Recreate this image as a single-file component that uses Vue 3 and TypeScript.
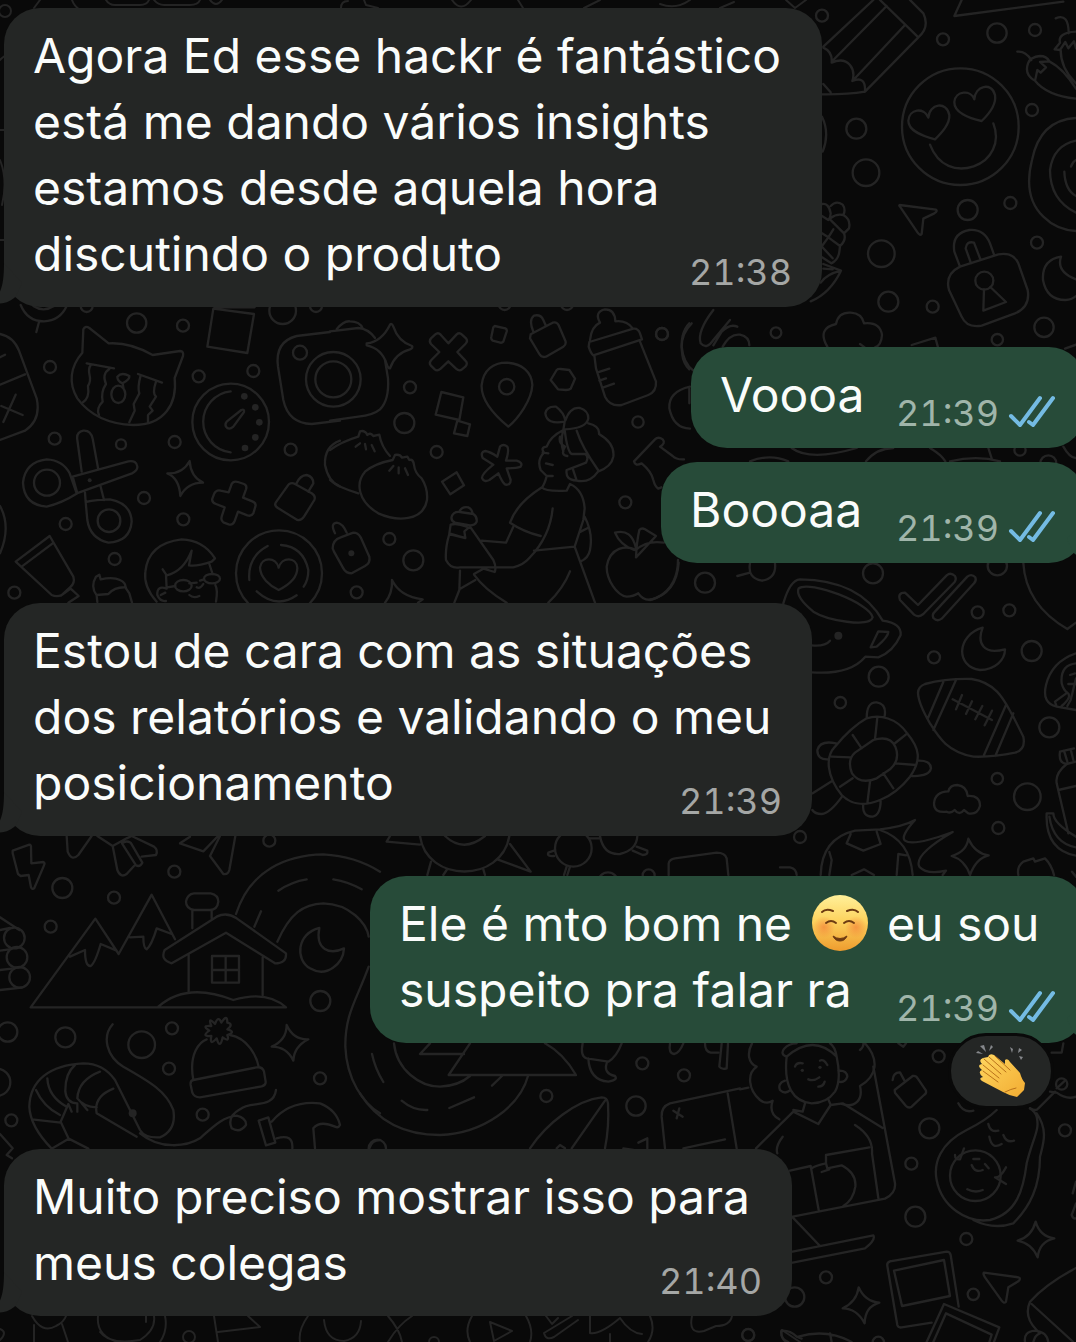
<script setup lang="ts">
interface Message {
  id: number
  side: 'in' | 'out'
  width: string
  lines: string[]
  time: string
  tail: boolean
  gap: 'first' | 'near' | 'far' | 'reacted'
  reaction?: boolean
}

const messages: Message[] = [
  {
    id: 1, side: 'in', width: 'w-xl', tail: true, gap: 'first', time: '21:38',
    lines: ['Agora Ed esse hackr é fantástico', 'está me dando vários insights', 'estamos desde aquela hora', 'discutindo o produto'],
  },
  { id: 2, side: 'out', width: 'w-xs', tail: false, gap: 'far', time: '21:39', lines: ['Voooa'] },
  { id: 3, side: 'out', width: 'w-sm', tail: true, gap: 'near', time: '21:39', lines: ['Boooaa'] },
  {
    id: 4, side: 'in', width: 'w-lg', tail: true, gap: 'far', time: '21:39',
    lines: ['Estou de cara com as situações', 'dos relatórios e validando o meu', 'posicionamento'],
  },
  {
    id: 5, side: 'out', width: 'w-md', tail: true, gap: 'far', time: '21:39', reaction: true,
    lines: ['Ele é mto bom ne ☺ eu sou', 'suspeito pra falar ra'],
  },
  {
    id: 6, side: 'in', width: 'w-ml', tail: true, gap: 'reacted', time: '21:40',
    lines: ['Muito preciso mostrar isso para', 'meus colegas'],
  },
]

type Ring = [number, number, number]

/* Each wallpaper tile is drawn in thirds of a pixel. */
const ringsNE: Ring[] = [
  [126, 47, 18], [489, 118, 18], [651, 99, 29], [765, 90, 18], [229, 386, 30], [258, 518, 40], [756, 330, 18],
  [563, 630, 30], [691, 609, 18], [771, 728, 18], [304, 761, 40], [325, 905, 30], [458, 920, 18], [792, 982, 29], [652, 1019, 17],
]
const ringsW: Ring[] = [
  [410, 69, 29], [549, 77, 18], [150, 201, 18], [596, 229, 18], [760, 213, 18], [900, 158, 21], [164, 416, 18],
  [363, 433, 15], [524, 426, 18], [872, 449, 18], [432, 594, 18], [197, 672, 18], [550, 658, 18], [344, 777, 18],
  [43, 878, 18], [848, 32, 40], [260, 18, 18], [948, 18, 18], [141, 548, 39], [327, 662, 34],
]
const ringsC: Ring[] = [
  [240, 262, 18], [223, 369, 30], [320, 456, 18], [178, 717, 18], [250, 781, 30], [80, 877, 18], [996, 102, 18],
  [924, 366, 17], [886, 607, 18], [530, 260, 23], [524, 12, 18], [711, 12, 18],
]
const ringsE: Ring[] = [
  [279, 40, 30], [652, 17, 29], [593, 157, 18], [688, 151, 18], [755, 273, 30], [462, 292, 18], [296, 350, 30],
  [181, 428, 17], [808, 502, 30], [652, 656, 17], [742, 710, 40], [655, 804, 18], [60, 831, 18],
]
const ringsSW: Ring[] = [
  [187, 204, 30], [342, 233, 18], [523, 155, 18], [152, 320, 18], [808, 62, 18], [961, 543, 30], [196, 652, 30],
  [23, 636, 29], [425, 674, 40], [516, 625, 18], [507, 746, 18], [960, 775, 18], [608, 884, 18], [34, 901, 18],
  [-10, 787, 41], [43, 354, 31], [51, 412, 31], [59, 472, 31],
]
const ringsS: Ring[] = [
  [559, 828, 18], [847, 730, 18], [972, 766, 18], [828, 858, 29], [52, 985, 26], [866, 166, 18], [744, 186, 29],
]
const ringsSE: Ring[] = [
  [596, 49, 18], [568, 265, 30], [514, 371, 18], [526, 530, 30], [679, 597, 18], [975, 271, 18], [258, 712, 18],
  [700, 763, 17], [164, 771, 29], [25, 885, 18], [415, 907, 17], [965, 132, 17],
]
</script>

<template>
  <main class="chat">
    <svg class="wallpaper" viewBox="0 0 1076 1342" preserveAspectRatio="xMidYMid slice" aria-hidden="true">
      <!-- sliver above the first message -->
      <g class="fine">
        <circle cx="5" cy="11" r="6" />
        <path d="M34 8L40 0M72 0Q74 6 80 10M106 0Q109 5 115 5H140Q147 5 149 0M154 0Q158 5 164 5H190Q198 5 200 0M210 0Q216 8 222 0M341 8Q341 1 348 1M364 0L366 5L378 8M452 0Q461 13 471 0M518 0L523 8M584 8L600 0M660 4Q676 10 690 0M720 8L734 2M786 0L795 8L806 0" />
        <path d="M0 60Q4 56 5 56M0 130H5M0 160Q8 180 2 205M0 240H5" />
      </g>

      <!-- pencil, heart eyes, padlock, berries -->
      <g class="sketch" transform="translate(780 0) scale(.33333)">
        <circle v-for="(r, i) in ringsNE" :key="i" :cx="r[0]" :cy="r[1]" :r="r[2]" />
        <path d="M130 140L280 0M160 180L320 18M220 240L375 75M255 275L415 112M300 0L415 112Q450 82 430 40L390 0M130 143Q158 155 155 188Q190 172 210 195Q226 215 217 243Q258 226 255 275Q200 284 125 283M130 252L152 277" />
        <path d="M545 0L523 48L850 5" />
        <circle cx="541" cy="380" r="175" />
        <path d="M465 418C425 407 385 392 385 362C387 327 432 320 445 353C448 310 500 302 508 345C510 372 485 398 465 418ZM605 363C565 355 522 337 523 306C526 272 573 268 583 298C584 258 635 244 645 285C650 315 627 342 605 363ZM450 434C475 500 530 516 581 499C635 481 662 426 640 370" />
        <path d="M712 155Q736 152 754 180M888 296Q800 286 765 242Q732 225 744 190Q752 170 780 168Q800 168 808 184L780 186L798 202L782 218L772 210Q768 230 765 242M808 184Q850 205 888 266M827 55Q866 38 866 100M888 95Q832 98 840 128L824 148L840 150L856 126L865 145L882 124L888 145M842 150Q842 205 888 250" />
        <path d="M888 354Q780 360 756 480Q728 590 790 650Q830 690 888 693M888 422Q820 436 810 510Q810 600 888 638M853 515Q855 570 888 588M873 500Q878 485 888 480M126 350Q150 400 128 455" />
        <path d="M359 615L468 629Q474 633 463 640L430 656L425 702Q420 708 413 698L360 620Q356 616 359 615Z" />
        <path d="M540 800L523 755Q514 700 568 690Q612 686 630 730L642 764M573 790L557 745Q560 722 582 728L602 780M540 800L655 763Q700 755 715 790L743 870Q752 920 705 940L605 977Q560 985 545 950L507 870Q494 823 540 800ZM612 868L610 932L678 906L631 861" />
        <circle cx="613" cy="842" r="27" />
        <path d="M843 770Q785 780 789 840Q800 900 856 900Q878 898 888 888M843 770Q828 815 888 838" />
        <path d="M126 612Q146 608 152 640Q152 652 145 660L126 648M152 618Q168 600 188 614Q198 628 190 645Q213 658 207 685L192 700Q200 720 180 738L178 755Q175 780 154 790L126 772M152 654Q170 640 190 645M150 658L192 700M126 700L145 712L180 738M145 712L160 688M126 738L145 712M126 740L158 775M130 792L183 812Q150 880 92 904M183 812Q140 822 122 848M130 806L158 808" />
        <path d="M142 1040Q110 985 168 972Q175 936 212 938Q246 940 252 970Q300 965 306 1005Q304 1036 285 1042M240 1032L254 1042M395 1035L466 1013L474 1042M855 1046L888 1034" />
      </g>

      <!-- cat, gauge, scissors, camera -->
      <g class="sketch" transform="translate(0 300) scale(.33333)">
        <circle v-for="(r, i) in ringsW" :key="i" :cx="r[0]" :cy="r[1]" :r="r[2]" />
        <path d="M62 15Q82 64 132 64Q180 62 200 18M100 18Q130 38 162 18M117 66L109 96" />
        <path d="M247 158L250 88Q256 76 268 84L326 130Q390 126 458 165L540 153Q552 154 549 168L524 234C532 310 495 375 400 375C320 372 265 340 232 295C205 250 210 200 247 158Z" />
        <path d="M260 190L342 205M272 195C256 220 282 230 264 258C268 285 262 300 247 308M328 207Q305 222 318 252Q302 276 308 305Q288 325 297 345M414 222L486 248M422 226Q412 262 418 280L401 312L404 332L388 367M468 245Q456 280 468 290L449 320L458 332L444 345V367M352 230Q365 215 388 228Q390 238 368 250Q352 244 352 230ZM368 250L370 262" />
        <ellipse cx="355" cy="283" rx="21" ry="26" />
        <path d="M622 140L640 26L762 42L742 159ZM644 22L764 22" />
        <circle cx="692" cy="366" r="115" />
        <path d="M692 274A92 92 0 0 0 692 457M680 365L724 330Q734 326 732 336L700 380Q686 392 678 380Q674 372 680 365Z" />
        <g class="dots">
          <circle cx="733" cy="289" r="10" /><circle cx="766" cy="322" r="10" /><circle cx="778" cy="367" r="10" />
          <circle cx="766" cy="412" r="10" /><circle cx="735" cy="444" r="10" /><circle cx="269" cy="541" r="6" />
        </g>
        <path d="M0 102Q40 110 57 152L110 295Q124 360 75 392L0 420M0 254L75 223M0 172L15 164M47 284L10 366M4 318L68 345M0 618Q34 680 0 760" />
        <path d="M245 515L232 420Q228 396 250 392Q272 390 278 416L294 504M218 530L385 484Q410 480 412 500Q413 512 396 520L230 580M230 580L209 520Q188 480 140 478Q75 486 69 548Q72 615 140 620Q185 610 232 580L218 530M255 578L257 606Q290 598 330 598Q393 610 395 665Q390 725 325 728Q270 715 262 660L257 606M302 560L312 600" />
        <path d="M502 520Q548 522 569 483Q572 530 609 548Q562 548 541 588Q538 535 502 520Z" />
        <path d="M686 577L695 552Q700 542 714 546L732 552Q742 556 738 568L729 593L757 604Q770 609 766 620L760 640Q754 650 742 646L714 635L704 663Q698 677 686 673L670 667Q662 662 665 650L674 622L648 612Q634 607 637 596L643 580Q650 568 662 572Z" />
        <path d="M866 553Q876 546 885 552L935 580Q948 588 943 600L912 650Q903 663 892 660L835 625Q822 618 827 608ZM888 553Q900 525 920 525Q940 530 940 550L925 575" />
        <path d="M990 96L890 108Q824 125 834 200L850 300Q865 370 935 372L1020 362M1020 422Q972 440 975 495Q985 545 1020 560" />
        <circle cx="1000" cy="238" r="82" /><circle cx="1000" cy="238" r="54" />
        <path d="M47 785L149 708L220 830Q226 850 210 862L185 885Q170 892 155 885ZM65 800L158 730M183 887L212 866L236 888L205 908" />
        <path d="M292 906L290 886Q270 860 288 830L298 824L302 838Q340 830 360 840Q378 848 376 862L388 880L396 908M290 885L325 882Q345 860 378 862" />
        <path d="M470 905Q430 860 436 815Q445 730 545 718Q610 720 645 775L635 785Q590 800 567 796L575 752Q550 815 500 826L488 808M498 826L500 866Q470 855 472 885Q480 905 498 903M482 885L496 878M628 792L638 822M646 855Q654 870 648 905M502 862L526 858M568 850L590 848M600 842L612 838M590 862Q600 868 610 852M568 885Q580 896 598 888" />
        <ellipse cx="550" cy="857" rx="25" ry="17" /><ellipse cx="636" cy="836" rx="24" ry="14" />
        <circle cx="837" cy="820" r="129" />
        <path d="M803 738Q742 770 748 840M843 735Q910 740 925 810Q925 840 911 860M770 874Q830 928 890 886M836 870C810 858 780 832 780 802C785 770 828 770 836 803C845 770 890 770 892 804C892 835 860 858 836 870Z" />
      </g>

      <!-- buns, pin, bottle, reader with a drink -->
      <g class="sketch" transform="translate(330 300) scale(.33333)">
        <circle v-for="(r, i) in ringsC" :key="i" :cx="r[0]" :cy="r[1]" :r="r[2]" />
        <path d="M0 94L85 84Q115 86 135 114M20 88Q40 62 60 64Q90 64 98 85M165 180L174 235Q178 300 150 328Q130 345 85 350L0 362" />
        <path d="M110 130Q155 125 180 74Q186 68 190 80Q205 125 246 138Q250 144 240 148Q195 160 180 205Q175 207 170 192Q155 145 110 136Z" />
        <path d="M355 130L380 103Q388 96 396 104L408 115Q415 124 406 132L382 156L406 182Q415 190 406 200L396 208Q388 215 378 206L355 184L332 206Q322 215 314 208L302 196Q296 188 304 180L328 156L303 132Q296 124 303 115L315 104Q324 96 332 104Z" />
        <path d="M494 78L526 85Q532 88 530 95L520 125Q515 130 508 127L488 122Q482 118 484 110L490 82ZM610 95Q595 60 612 47Q632 42 640 60L648 78M602 103L668 68Q680 64 686 76L706 122Q710 134 700 140L648 170Q635 174 628 162L600 115ZM662 240L680 210Q684 206 692 207L718 210L735 236L722 266Q718 270 708 270L684 268ZM334 276L400 292L388 360L317 344ZM382 362L420 373L412 408L372 400ZM336 545L380 517L402 556L361 583Z" />
        <path d="M535 380C505 355 452 305 455 255C460 210 490 188 530 188C575 190 605 215 607 255C605 300 565 355 535 380Z" />
        <path d="M810 68Q792 35 825 28Q855 28 856 64Q890 60 908 85M780 120Q784 80 810 68M778 126L910 86Q924 84 930 100L936 118L790 166Q782 160 776 140ZM793 166L798 205L825 290Q840 320 875 315L955 285Q980 275 978 245L930 125M803 217L838 206M808 242L828 235M820 262L852 251" />
        <path d="M85 580Q20 560 0 540M0 450Q35 425 85 410L90 394Q105 390 112 405Q120 396 130 408L148 404Q154 440 180 468M90 430L77 440M105 432L108 448M125 435L134 454" />
        <path d="M195 465Q210 462 216 473L232 470L238 480Q250 476 252 495Q255 520 275 535Q294 565 291 600C280 665 200 665 145 640C85 605 75 550 105 515Q135 490 188 480ZM190 498L178 512M206 502V520M225 505L234 525" />
        <path d="M502 470L510 440Q520 430 532 440Q538 450 528 482L560 482Q580 488 572 500Q560 505 530 505L542 540Q542 556 526 554Q518 550 505 520L478 540Q462 548 456 534Q455 522 490 494L458 474Q450 456 466 453Q480 455 502 470Z" />
        <path d="M15 700Q0 670 20 668Q38 670 50 698M8 745Q8 720 32 712L70 698Q84 698 92 712L118 770Q122 788 105 798L65 820Q48 820 40 805L12 755Z" />
        <circle cx="64" cy="760" r="9" class="solid" />
        <path d="M165 908Q188 880 186 840Q210 890 278 898L264 908M373 908L388 870L390 812M388 868L436 840" />
        <path d="M388 636Q395 618 415 622Q425 626 428 640M365 650Q370 634 390 636L430 642Q442 650 440 665Q435 676 420 676L375 668Q362 662 365 650ZM362 674L358 700L406 714L403 694L420 680L490 780Q500 802 494 816L460 806M406 714L358 702Q345 745 348 780Q362 808 390 802H550Q580 795 598 774Q660 710 668 625M432 822L460 806M432 824Q465 870 530 908M455 722L528 728L550 680M362 674Q380 668 410 680" />
        <path d="M704 365Q650 375 646 340Q650 318 678 320Q702 338 706 362Q720 320 750 324Q775 332 775 355Q770 385 704 388M704 365L700 390Q690 425 700 455M700 390Q660 410 650 440Q630 442 642 458Q620 480 632 510L650 528L668 528M650 528Q645 550 636 562Q560 610 540 668Q580 695 632 708M704 390Q712 455 725 462H765M740 392Q755 440 804 510M775 370Q810 378 807 402Q855 430 850 470Q845 500 804 515Q780 550 740 542Q705 540 710 510Q725 505 768 488Q778 470 765 462M728 505L740 542M636 562Q645 575 710 572L720 552Q760 570 764 625L760 660L734 740L612 752M764 650Q790 700 780 750Q775 775 752 784M752 695L772 685M734 740L795 908M720 814Q700 865 655 908M648 490L668 495M638 458L655 460M690 410Q685 430 705 440M705 440Q690 465 712 468" />
        <path d="M912 484L975 418Q985 408 998 418Q1008 430 990 440L1028 468Q1040 480 1062 478M912 484Q915 500 935 490Q965 515 970 540Q975 560 985 566L994 562" />
        <path d="M918 750C890 735 840 740 830 800C830 840 860 885 890 890Q910 890 925 880Q945 910 980 893C1030 870 1044 820 1044 780M918 750Q950 720 1002 728M918 772Q920 725 928 690Q935 682 945 688L978 708L918 772M912 750Q870 735 855 698Q905 685 918 745" />
        <path d="M1078 70Q1048 100 1057 165Q1060 190 1078 208M1080 260Q1015 275 1018 325Q1030 385 1080 386M1078 266V310" />
      </g>

      <!-- slivers between the replies -->
      <g class="sketch" transform="translate(650 330) scale(.33333)">
        <path d="M125 -20Q95 10 95 50Q100 100 130 122M190 -60Q140 5 152 40Q170 60 190 30L240 -30M190 46L215 5Q240 -20 262 -10M218 50Q240 10 270 14Q298 20 298 46" />
        <path d="M425 354Q480 395 620 354M648 394Q680 355 730 354M840 354Q875 375 886 394M1015 354L1025 385M1240 350Q1260 385 1278 384M300 394Q360 370 415 394M900 394Q980 375 1050 394" />
        <circle cx="378" cy="8" r="16" /><circle cx="1110" cy="360" r="17" /><circle cx="1195" cy="400" r="24" />
        <circle cx="165" cy="758" r="30" /><circle cx="36" cy="12" r="18" />
        <path d="M300 700Q292 745 336 752Q380 745 375 700M262 738L300 728M0 810Q80 790 86 698" />
      </g>

      <!-- cup, ticks, football, turtle -->
      <g class="sketch" transform="translate(780 560) scale(.33333)">
        <circle v-for="(r, i) in ringsE" :key="i" :cx="r[0]" :cy="r[1]" :r="r[2]" />
        <path d="M10 130Q30 60 60 58Q240 60 308 182Q365 190 362 225Q340 275 295 292L256 290Q210 345 95 337M56 85C90 60 270 130 278 172C270 205 140 180 100 155Q45 110 56 85ZM295 214L325 216Q325 230 290 260L272 262ZM95 256Q135 260 150 242" />
        <circle cx="175" cy="227" r="12" class="solid" />
        <path d="M360 120Q352 98 375 98L414 135L500 46Q512 36 525 48Q530 56 524 66L430 162Q416 174 402 164ZM462 158L562 50Q575 40 586 52Q590 62 582 70L485 176Q472 186 460 174Q456 164 462 158Z" />
        <path d="M730 9C735 100 790 165 862 207L888 188M608 203C530 225 525 320 600 330C645 330 675 300 675 268C610 285 590 250 608 203Z" />
        <path d="M414 398Q415 380 435 372Q500 355 575 357C660 370 680 440 700 470L730 530Q738 570 705 578Q640 592 580 590C500 575 475 530 450 490Q415 430 414 398ZM490 366L444 474M528 360L460 510M678 435L612 585M700 460L646 588M518 418L636 480M546 405L528 448M576 424L558 462M607 438L586 478M636 452L614 496" />
        <path d="M260 475Q260 425 290 427Q320 432 314 468M260 475C300 462 350 475 380 518C420 565 425 600 390 650Q350 700 300 720C250 740 215 735 185 705C140 650 135 590 165 560Q215 500 260 475ZM280 540Q330 525 346 560Q362 600 330 628L290 655Q240 675 216 640Q200 600 225 578ZM292 472L285 538M382 520L342 552M218 525L245 565M155 590L212 592M180 680L218 655M270 665L262 730M310 640L340 685M346 610L408 615M168 550Q120 540 112 570Q112 600 145 598M412 602Q452 600 453 625Q448 650 395 648M250 732Q245 770 278 770Q302 765 302 720M155 664L98 700M186 710Q150 760 125 762Q105 762 97 750" />
        <path d="M500 755Q462 760 462 730Q465 695 505 694Q510 675 532 675Q560 678 563 708Q600 705 600 738Q592 765 565 760L552 750Q538 768 524 750Q512 762 500 755Z" />
        <path d="M888 280Q815 305 798 375Q785 430 830 440L888 450M888 310Q840 315 845 370Q850 390 862 398M862 398L825 425L830 440M862 398Q878 410 845 438M888 355L872 420L862 438M865 372H888M870 345L885 340" />
        <path d="M840 575L882 565M840 575Q835 610 860 612L888 605M852 572L862 605M872 568L880 600M860 612Q825 640 830 670L865 820M835 690L888 678M800 760H820Q820 790 888 830M800 760Q795 870 888 887M808 770Q820 850 888 862" />
        <path d="M122 945Q125 835 225 812L300 808Q370 800 405 780Q360 830 375 842Q400 860 518 816Q400 885 418 920Q440 945 498 932L488 945M300 810Q390 840 398 945M212 822L200 850L250 872L302 852L290 815M148 876L155 900L148 945M350 945L355 882L378 886M215 945L252 928L282 945M565 836Q585 880 626 886Q588 895 570 945Q555 900 515 888Q560 875 565 836ZM715 945Q710 920 730 905L760 895L765 905L795 895Q815 915 822 945M0 922H30Q48 925 50 945M876 935L888 950" />
      </g>

      <!-- mountains, cabin, winding road, shrimp -->
      <g class="sketch" transform="translate(0 820) scale(.33333)">
        <circle v-for="(r, i) in ringsSW" :key="i" :cx="r[0]" :cy="r[1]" :r="r[2]" />
        <path d="M38 92L88 74Q94 74 93 84L94 130L130 126Q136 128 132 136L103 204Q98 210 93 202L86 165L62 168L54 162L38 100ZM200 48L203 95Q215 125 235 105L275 48M292 48L338 78L380 55L395 48L462 80Q475 90 468 105L425 110M338 78L352 150Q362 175 380 162L402 138M366 70L408 136Q420 142 427 128L392 68Q378 60 366 70M540 70L610 94L654 48M540 70L570 50M630 108L670 162Q684 165 688 150L706 48M630 108L660 48" />
        <path d="M92 562L286 296L356 402L455 224L525 358M92 562H858M210 410L255 390Q255 440 272 438Q285 430 302 372L350 392M390 352L430 350Q430 385 440 388Q455 375 470 325L515 342M475 560Q560 485 700 540Q800 510 858 562" />
        <path d="M494 390Q480 420 515 430L678 338L825 430Q860 430 858 400L710 295Q680 275 650 290ZM566 405V515M788 412V525M577 270V325M635 270V295M582 220H632Q655 225 655 245Q652 270 630 270H582Q558 265 558 245Q562 222 582 220ZM636 408H717V488H636ZM677 408V488M636 450H717M783 274L763 320" />
        <path d="M708 282C750 150 860 105 970 103Q1065 108 1140 155M835 212Q875 185 920 178M1000 178Q1045 185 1085 208M832 365C870 280 910 252 970 250C1050 252 1100 310 1106 350M1106 440C1070 540 1035 580 1036 680C1040 780 1090 850 1140 880" />
        <path d="M958 324C890 340 885 420 930 445C980 475 1030 430 1032 385C990 405 945 390 958 324Z" />
        <path d="M0 292L58 330M0 330L30 324M0 392L28 388M0 450L35 446M0 510L65 503" />
        <path d="M580 780C565 700 600 665 620 658M690 645C745 655 770 710 776 740M580 780L770 742Q788 740 792 755L797 785Q798 795 785 799L600 832Q582 832 577 818L572 795Q570 782 580 780Z" />
        <path d="M645 612Q655 585 664 608Q682 580 682 608Q702 612 682 628Q710 636 682 645Q690 668 668 652Q660 690 650 655Q628 680 634 648Q602 650 628 632Q602 615 634 618Q622 588 645 612Z" />
        <path d="M860 615Q880 660 925 658Q882 680 880 722Q860 680 815 680Q860 660 860 615Z" />
        <path d="M338 613C305 650 320 710 370 740C450 785 500 815 520 870Q530 930 480 952Q435 955 420 930L345 780Q310 730 250 730C150 735 90 780 88 860C90 910 120 950 155 986M410 950L290 880Q280 830 340 806M290 862Q250 860 232 835Q235 780 300 755M232 850Q200 850 196 815Q195 760 225 735M200 860Q145 830 142 775M180 885Q130 860 108 810M182 908L96 898M155 986L206 956L182 905L205 852L215 875M232 852V875M245 850L262 870M206 956L265 986M420 940C480 990 560 980 600 955C640 920 670 890 710 887Q740 895 738 915Q720 940 695 925Q680 890 720 868C750 840 820 870 828 810" />
        <circle cx="398" cy="880" r="12" class="solid" />
        <path d="M776 902L805 892L826 968L798 976ZM815 905Q870 840 960 850Q1010 870 1020 915Q1015 925 1005 920Q960 900 940 925L945 985M830 955Q880 940 877 985M1108 985Q1115 960 1140 960M0 942L38 985L20 1005L36 1015" />
      </g>

      <!-- road end, tents, leaf -->
      <g class="sketch" transform="translate(360 820) scale(.33333)">
        <circle v-for="(r, i) in ringsS" :key="i" :cx="r[0]" :cy="r[1]" :r="r[2]" />
        <path d="M90 48L80 65L180 74M180 48C200 190 425 190 448 48M255 48Q310 100 375 48M450 72L512 155L412 118M213 125L202 165M260 150L250 165M370 148L375 165" />
        <circle cx="640" cy="85" r="55" />
        <path d="M582 92L565 98Q560 110 582 108M688 55L720 55M720 48Q730 105 780 102Q830 90 832 48M830 80L862 92Q865 105 848 105L818 92M612 165L620 140M630 140L622 165M926 165V130Q928 118 945 115L1070 98Q1095 98 1100 115L1105 165" />
        <path d="M210 670L180 702H312M330 670L266 765H648Q610 700 555 670M102 670C110 750 180 800 240 800Q295 798 330 768M0 820C50 900 130 945 240 945C370 940 480 860 505 765M36 702Q45 745 70 786M125 842Q160 872 202 870M268 864L342 832M396 797L426 768" />
        <path d="M510 985C560 910 650 840 725 832Q742 832 744 850Q748 920 735 985M735 842L635 985M590 985L600 975L615 985M790 985L820 990M835 968L862 955V985" />
        <path d="M668 670Q660 710 680 715L745 725Q770 710 785 670M685 715Q688 780 745 785Q775 780 765 768Q730 760 740 730M930 670Q925 700 942 702Q958 700 970 670M1035 670Q1035 695 1052 698H1075M1085 670L1078 740Q1085 750 1100 745L1104 670" />
        <path d="M915 985L905 890Q903 860 930 850L1140 805M1103 820L1130 985M970 985L1095 958M940 872L968 890M958 865L950 895" />
      </g>

      <!-- student at a desk, avocado, photos -->
      <g class="sketch" transform="translate(740 1040) scale(.33333)">
        <circle v-for="(r, i) in ringsSE" :key="i" :cx="r[0]" :cy="r[1]" :r="r[2]" />
        <path d="M36 10C20 40 25 70 50 80C20 100 25 150 60 180Q80 195 98 182Q85 220 118 238M375 10C420 60 410 110 360 138C370 180 345 205 305 192M360 30Q372 20 370 10M0 148L25 143" />
        <path d="M140 50Q220 -20 290 50Q305 120 285 155Q260 190 215 190C160 185 130 140 140 50ZM140 50C110 40 140 10 170 10M290 50Q285 20 270 10M135 122Q112 130 120 150Q135 165 152 150M295 92Q320 90 322 110Q315 130 295 125M195 190L188 215L160 210M265 178L272 195L235 252L160 215L48 325M272 195L308 190L428 264M165 80Q170 66 188 70M240 62Q250 55 262 75M205 118Q220 125 238 112M235 140Q250 140 254 125M400 80L465 430Q468 460 435 476L158 530M128 290Q105 320 112 340M345 255Q400 290 396 340L415 474M150 392L212 378L236 510M215 385Q230 375 258 370V345L388 322M258 370L262 385L305 376Q350 400 346 440Q340 480 310 498M245 396L268 388M158 532L240 618M158 635L400 586Q408 600 375 625L158 668" />
        <circle cx="187" cy="91" r="5" class="solid" /><circle cx="240" cy="82" r="5" class="solid" />
        <path d="M458 120Q460 96 480 97L495 125M464 150L518 108Q528 106 533 115L558 152Q560 160 552 165L515 200Q506 206 498 198L465 158ZM475 10L490 20L498 10" />
        <path d="M770 210Q740 240 680 270C600 310 580 370 590 420C605 500 680 550 750 540C830 520 850 450 860 370C880 290 900 270 890 230Q885 215 870 205M890 220C925 270 910 310 900 350C900 440 870 500 820 550Q760 570 700 540" />
        <circle cx="706" cy="407" r="76" />
        <path d="M745 252Q750 278 775 272M748 290Q755 330 785 312M790 285Q800 310 822 302M645 345Q645 360 660 358L672 325M798 382Q780 415 765 412L798 432M695 375Q705 400 728 390M682 448Q705 460 728 450M700 357H718M735 372L746 385M655 190Q670 220 700 212M870 205Q890 215 895 205L925 175Q940 160 945 155M930 155L950 158Q980 180 1008 170M935 38H965L970 10M950 145L975 122M1008 425L998 460M995 525Q1000 538 1008 535M995 525L1008 490" />
        <path d="M887 545Q900 590 943 595Q898 605 893 652Q875 610 833 602Q875 590 887 545ZM356 742Q375 785 418 788Q375 800 374 850Q350 805 308 805Q350 785 356 742Z" />
        <path d="M450 664L620 635Q630 635 632 645L656 800M450 664Q440 668 442 678L472 855Q475 864 485 862L575 848M462 692L612 660L630 768L486 798ZM560 906L612 792L778 862L762 906M580 906L618 820L755 884L748 906" />
        <path d="M732 698L835 712Q845 714 835 724L805 742L798 785Q792 792 785 782L735 712Q728 700 732 698ZM1008 684Q920 730 870 785Q850 830 890 870L900 880M875 792L1000 906M855 906Q850 875 885 872Q920 875 925 906M880 906Q885 885 900 880" />
        <path d="M124 872Q120 895 145 906M124 872Q150 870 170 890L185 896M175 890Q260 865 335 906M270 880L275 906" />
      </g>

      <!-- bottom sliver -->
      <g class="fine">
        <path d="M32 1316Q42 1334 56 1326Q64 1322 66 1316M34 1325V1342M62 1324L68 1342M98 1316Q96 1336 118 1342M100 1332Q110 1345 140 1340Q156 1330 154 1316M165 1316Q168 1330 160 1342M146 1316V1322M214 1316L218 1342M218 1332L260 1327L248 1316M308 1316Q298 1330 300 1342M324 1320Q326 1341 344 1341Q360 1338 361 1321M412 1316Q398 1325 388 1342M388 1316Q400 1330 402 1342M472 1316Q464 1330 470 1342M526 1316Q534 1330 530 1342M490 1322L512 1331L494 1341ZM546 1316L552 1324L558 1318M572 1316L544 1333Q546 1341 554 1337L578 1320M590 1316V1333Q600 1335 620 1318Q630 1333 642 1334M650 1316Q656 1330 648 1342M610 1342V1334M692 1316Q688 1335 704 1331L716 1326Q730 1326 732 1316M782 1330L800 1342M782 1330Q780 1338 786 1342M0 1329Q8 1332 0 1340" />
        <circle cx="189" cy="1337" r="6" /><circle cx="434" cy="1342" r="5" /><circle cx="748" cy="1335" r="6" />
      </g>
    </svg>

    <article v-for="m in messages" :key="m.id" class="bubble" :class="[m.side, m.width, m.gap]">
      <svg v-if="m.tail" class="tail" viewBox="0 0 28 44" aria-hidden="true">
        <path d="M10 0C10 22 7 33 -4 40C6 42 16 40 22 33L28 20Z" />
      </svg>
      <p v-for="line in m.lines.slice(0, -1)" :key="line" class="line">
        <template v-if="line.includes('☺')">
          {{ line.split('☺')[0] }}<svg class="smile" viewBox="0 0 60 60" role="img" aria-label="☺️">
            <defs>
              <linearGradient id="face" x1="0" y1="0" x2="0" y2="1">
                <stop offset="0" stop-color="#fff09a" /><stop offset=".45" stop-color="#fdd460" /><stop offset="1" stop-color="#ee9c2e" />
              </linearGradient>
              <radialGradient id="blush">
                <stop offset="0" stop-color="#f2662f" stop-opacity=".5" /><stop offset="1" stop-color="#f2662f" stop-opacity="0" />
              </radialGradient>
            </defs>
            <circle cx="30" cy="30" r="28" fill="url(#face)" />
            <circle cx="14" cy="34" r="11" fill="url(#blush)" />
            <circle cx="46" cy="34" r="11" fill="url(#blush)" />
            <g fill="none" stroke="#6d3b12" stroke-width="2" stroke-linecap="round">
              <path d="M12 19Q16 15 23 18M37 18Q44 15 48 19" />
              <path d="M16 30Q21 26 26 30M34 30Q39 26 44 30" />
            </g>
            <path d="M23 43Q30 48 37 43Q35 48 30 48Q25 48 23 43Z" fill="#6d3b12" stroke="#6d3b12" stroke-linejoin="round" />
          </svg>{{ line.split('☺')[1] }}
        </template>
        <template v-else>{{ line }}</template>
      </p>
      <div class="last">
        <p class="line">{{ m.lines[m.lines.length - 1] }}</p>
        <div class="meta">
          <time>{{ m.time }}</time>
          <svg v-if="m.side === 'out'" class="ticks" viewBox="0 0 46 32" role="img" aria-label="Lida">
            <path d="M2 19L11 28L31 1M20 25L24 28L44 1" />
          </svg>
        </div>
      </div>
      <button v-if="m.reaction" class="reaction" type="button" aria-label="Reação 👏">
        <svg viewBox="0 0 52 54" aria-hidden="true">
          <defs>
            <linearGradient id="hand" x1="0" y1="0" x2="1" y2="1">
              <stop offset="0" stop-color="#ffd760" /><stop offset="1" stop-color="#f2ac32" />
            </linearGradient>
          </defs>
          <path d="M30 16Q33 14 35 18L45 29Q47 36 50 39L49 46L42 53Q35 52 28 48L7 37Q3 34 8 33Q2 28 7 26Q1 21 7 20Q3 16 8 14L13 13Q14 9 19 11L30 20Z" fill="url(#hand)" />
          <path d="M9 15L26 30M8 21L24 34M8 27L23 38M14 13L31 28M20 12L35 26M30 48Q36 45 41 44" fill="none" stroke="#ba721a" stroke-width="1" stroke-linecap="round" />
          <path d="M5 2L9 1L11 8ZM14 7L16 1L18 3ZM1 9L3 7L8 10ZM35 3L38 5L37 9ZM43 9L44 4L47 6ZM44 12L48 13L46 16Z" fill="#85878b" />
        </svg>
      </button>
    </article>
  </main>
</template>

<style>
body {
  margin: 0;
  background: #090909;
}
</style>

<style scoped>
.chat {
  position: relative;
  display: flex;
  flex-direction: column;
  min-height: 100vh;
  overflow: hidden;
  box-sizing: border-box;
  padding: 8px 0 24px 4px;
  background: #090909;
  font-family: Inter, 'Noto Sans', sans-serif;
  color: #fafcfb;
}

.wallpaper {
  position: absolute;
  inset: 0;
  width: 100%;
  height: 100%;
}

.sketch,
.fine {
  fill: none;
  stroke: #242424;
  stroke-width: 7;
  stroke-linecap: round;
  stroke-linejoin: round;
}

.fine {
  stroke-width: 2;
}

.dots circle,
.solid {
  fill: #242424;
  stroke: none;
}

.bubble {
  position: relative;
  box-sizing: border-box;
  padding: 15px 30px 20px 29px;
  border-radius: 36px;
}

.in {
  align-self: flex-start;
  background: #242625;
  --fill: #242625;
}

.out {
  align-self: flex-end;
  margin-right: -9px;
  background: #274b39;
  --fill: #274b39;
}

.w-xs { width: 394px; }
.w-sm { width: 424px; }
.w-md { width: 715px; }
.w-ml { width: 788px; }
.w-lg { width: 808px; }
.w-xl { width: 818px; }

.near { margin-top: 14px; }
.far { margin-top: 40px; }
.reacted { margin-top: 106px; }

.tail {
  position: absolute;
  bottom: 0;
  left: -10px;
  width: 28px;
  height: 44px;
  overflow: visible;
  fill: var(--fill);
}

.out .tail {
  left: auto;
  right: -10px;
  transform: scaleX(-1);
}

.line {
  margin: 0;
  font-size: 48px;
  line-height: 66px;
  white-space: nowrap;
}

.last {
  display: flex;
  align-items: flex-end;
  justify-content: space-between;
}

.meta {
  display: flex;
  align-items: center;
  gap: 10px;
  margin-bottom: -5px;
  font-size: 36px;
  font-variant-numeric: tabular-nums;
  line-height: 40px;
  color: #a5a7a6;
}

.out .meta {
  color: #a0b5aa;
}

.ticks {
  width: 46px;
  height: 32px;
  fill: none;
  stroke: #74bbe3;
  stroke-width: 4;
  stroke-linecap: round;
  stroke-linejoin: round;
  overflow: visible;
}

.smile {
  width: 60px;
  height: 60px;
  margin: 0 4px;
  vertical-align: -12px;
}

.reaction {
  position: absolute;
  right: 31px;
  bottom: -66px;
  display: grid;
  place-items: center;
  width: 106px;
  height: 76px;
  padding: 0;
  border: 3px solid #090909;
  border-radius: 38px;
  background: #242625;
}

.reaction svg {
  width: 52px;
  height: 54px;
}
</style>
